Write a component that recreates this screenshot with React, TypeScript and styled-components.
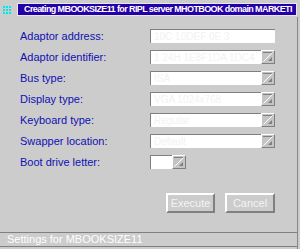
import React from 'react';
import styled, { createGlobalStyle } from 'styled-components';

const GlobalStyle = createGlobalStyle`
  html, body {
    margin: 0;
    padding: 0;
    background: #cccccc;
  }
  body {
    width: 300px;
    height: 249px;
    overflow: hidden;
    font-family: "Liberation Sans", Arial, sans-serif;
  }
`;

const Window = styled.div`
  width: 300px;
  height: 249px;
  display: flex;
  flex-direction: column;
  background: #cccccc;
`;

const TitleRow = styled.div`
  display: flex;
  align-items: center;
  height: 17px;
  padding: 2px 3px 0 3px;
  box-sizing: border-box;
`;

const SysIcon = styled.div`
  display: grid;
  grid-template-columns: repeat(3, 2px);
  grid-auto-rows: 2px;
  gap: 1px;
  width: 8px;
  margin-right: 6px;
`;

const Dot = styled.span`
  background: #00e8e8;
`;

const TitleBar = styled.div`
  flex: 1;
  height: 13px;
  background: #2400a8;
  border: 1px solid #e8e8e8;
  box-sizing: border-box;
  color: #ffffff;
  font-size: 9px;
  font-weight: bold;
  line-height: 11px;
  padding-left: 6px;
  white-space: nowrap;
  overflow: hidden;
  letter-spacing: -0.6px;
`;

const Body = styled.div`
  flex: 1;
  display: flex;
  flex-direction: column;
  margin-right: 2px;
  border-right: 1px solid #888888;
`;

const Form = styled.div`
  display: grid;
  grid-template-columns: 130px auto;
  grid-auto-rows: 21px;
  padding: 12px 0 0 20px;
`;

const Label = styled.div`
  color: #1010b4;
  font-size: 11px;
  line-height: 14px;
`;

const FieldWrap = styled.div`
  display: flex;
  height: 14px;
`;

const Input = styled.div<{ w: number }>`
  width: ${p => p.w}px;
  height: 14px;
  box-sizing: border-box;
  background: #ffffff;
  border-top: 1px solid #808080;
  border-left: 1px solid #808080;
  color: #f2f2f2;
  font-size: 10px;
  line-height: 13px;
  padding-left: 3px;
  white-space: nowrap;
  overflow: hidden;
`;

const PromptBtn = styled.div`
  width: 14px;
  height: 14px;
  box-sizing: border-box;
  background: #c4c4c4;
  border-top: 1px solid #ffffff;
  border-left: 1px solid #ffffff;
  border-right: 1px solid #808080;
  border-bottom: 1px solid #808080;
  display: flex;
  align-items: center;
  justify-content: center;
`;

const Buttons = styled.div`
  display: flex;
  justify-content: flex-end;
  gap: 10px;
  margin-top: 17px;
  padding-right: 22px;
`;

const PushButton = styled.div<{ w: number }>`
  width: ${p => p.w}px;
  height: 20px;
  box-sizing: border-box;
  border-top: 2px solid #ffffff;
  border-left: 2px solid #ffffff;
  border-right: 2px solid #808080;
  border-bottom: 2px solid #808080;
  color: #f4f4f4;
  font-size: 11px;
  line-height: 16px;
  text-align: center;
`;

const Spacer = styled.div`
  flex: 1;
`;

const StatusBar = styled.div`
  height: 13px;
  border-top: 1px solid #808080;
  border-bottom: 1px solid #808080;
  color: #ffffff;
  font-size: 11px;
  line-height: 13px;
  padding-left: 7px;
  margin-bottom: 2px;
`;

const PromptIcon = () => (
  <svg width="10" height="10" viewBox="0 0 10 10">
    <line x1="0.5" y1="9.5" x2="9.5" y2="0.5" stroke="#ffffff" strokeWidth="1" />
    <polygon points="9,5 9,9 5,9" fill="#808080" />
    <line x1="0" y1="0.5" x2="9" y2="0.5" stroke="#808080" />
  </svg>
);

const rows = [
  { label: 'Adaptor address:', value: '10C 10DEF 0E 3', w: 125, prompt: false },
  { label: 'Adaptor identifier:', value: '1 24H 1E8F1DA 1DC4', w: 111, prompt: true },
  { label: 'Bus type:', value: 'ISA', w: 111, prompt: true },
  { label: 'Display type:', value: 'VGA 1024x768', w: 111, prompt: true },
  { label: 'Keyboard type:', value: 'Regular', w: 111, prompt: true },
  { label: 'Swapper location:', value: 'Default', w: 111, prompt: true },
  { label: 'Boot drive letter:', value: '', w: 22, prompt: true },
];

export default function App() {
  return (
    <Window>
      <GlobalStyle />
      <TitleRow>
        <SysIcon>
          {Array.from({ length: 9 }).map((_, i) => <Dot key={i} />)}
        </SysIcon>
        <TitleBar>Creating MBOOKSIZE11 for RIPL server MHOTBOOK domain MARKETI</TitleBar>
      </TitleRow>
      <Body>
        <Form>
          {rows.map(r => (
            <React.Fragment key={r.label}>
              <Label>{r.label}</Label>
              <FieldWrap>
                <Input w={r.w}>{r.value}</Input>
                {r.prompt && (
                  <PromptBtn>
                    <PromptIcon />
                  </PromptBtn>
                )}
              </FieldWrap>
            </React.Fragment>
          ))}
        </Form>
        <Buttons>
          <PushButton w={49}>Execute</PushButton>
          <PushButton w={50}>Cancel</PushButton>
        </Buttons>
        <Spacer />
        <StatusBar>Settings for MBOOKSIZE11</StatusBar>
      </Body>
    </Window>
  );
}
